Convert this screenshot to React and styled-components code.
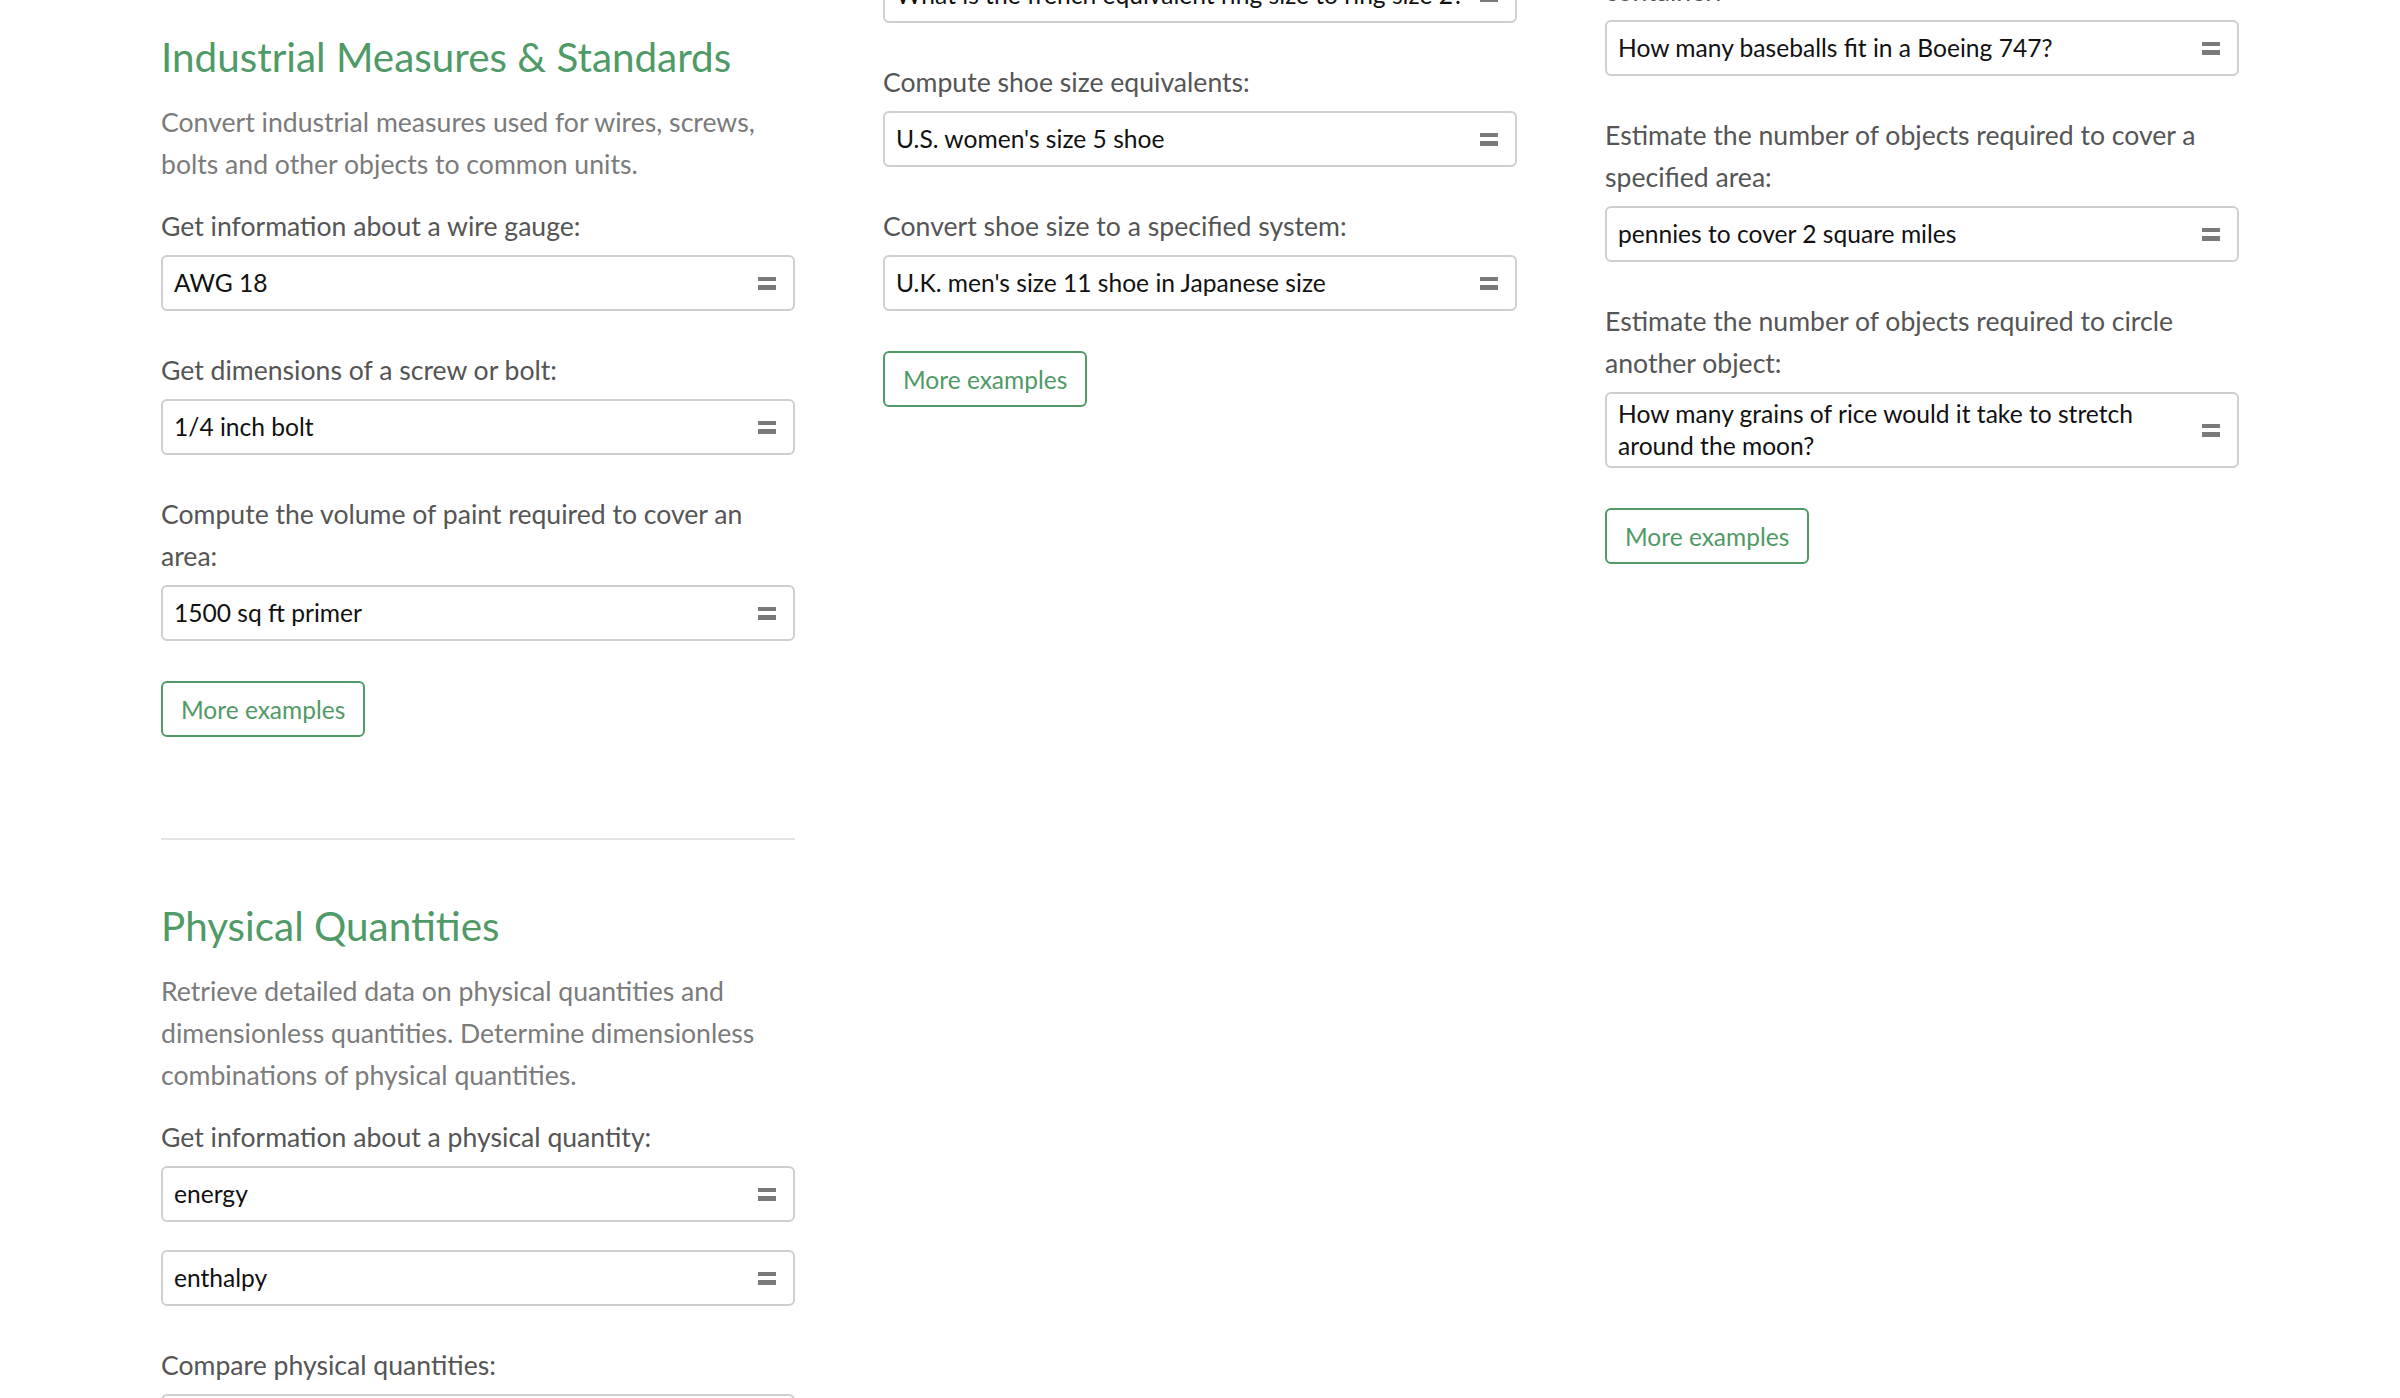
import React from "react";
import styled, { createGlobalStyle } from "styled-components";

const GREEN = "#4f9a66";

const GlobalStyle = createGlobalStyle`
  html, body {
    margin: 0;
    padding: 0;
    background: #fff;
    overflow: hidden;
  }

  body {
    font-family: Lato, "Open Sans", sans-serif;
    -webkit-font-smoothing: antialiased;
  }
`;

const columns = [
  {
    shift: 32,
    sections: [
      {
        title: "Industrial Measures & Standards",
        text: "Convert industrial measures used for wires, screws, bolts and other objects to common units.",
        examples: [
          { label: "Get information about a wire gauge:", inputs: ["AWG 18"] },
          { label: "Get dimensions of a screw or bolt:", inputs: ["1/4 inch bolt"] },
          {
            label: "Compute the volume of paint required to cover an area:",
            inputs: ["1500 sq ft primer"],
          },
        ],
      },
      {
        title: "Physical Quantities",
        text: "Retrieve detailed data on physical quantities and dimensionless quantities. Determine dimensionless combinations of physical quantities.",
        examples: [
          {
            label: "Get information about a physical quantity:",
            inputs: ["energy", "enthalpy"],
          },
          { label: "Compare physical quantities:", inputs: ["energy vs work"] },
        ],
      },
    ],
  },
  {
    shift: -83,
    sections: [
      {
        examples: [
          {
            label: "Convert ring size to a specified system:",
            inputs: ["What is the french equivalent ring size to ring size 2?"],
          },
          { label: "Compute shoe size equivalents:", inputs: ["U.S. women's size 5 shoe"] },
          {
            label: "Convert shoe size to a specified system:",
            inputs: ["U.K. men's size 11 shoe in Japanese size"],
          },
        ],
      },
    ],
  },
  {
    shift: -72,
    sections: [
      {
        examples: [
          {
            label: "Estimate the number of objects required to fill a container:",
            inputs: ["How many baseballs fit in a Boeing 747?"],
          },
          {
            label: "Estimate the number of objects required to cover a specified area:",
            inputs: ["pennies to cover 2 square miles"],
          },
          {
            label: "Estimate the number of objects required to circle another object:",
            inputs: ["How many grains of rice would it take to stretch around the moon?"],
          },
        ],
      },
    ],
  },
];

const EqualsIcon = () => (
  <svg width="18" height="13" viewBox="0 0 18 13" aria-hidden="true">
    <rect x="0" y="0" width="18" height="4" fill="#7a7a7a" />
    <rect x="0" y="8" width="18" height="5" fill="#7a7a7a" />
  </svg>
);

const App = () => {
  return (
    <Page>
      <GlobalStyle />
      <Grid>
        {columns.map((col, i) => (
          <Column key={i} $shift={col.shift}>
            {col.sections.map((s, j) => (
              <Section key={j}>
                {s.title && <Heading>{s.title}</Heading>}
                {s.text && <Description>{s.text}</Description>}
                <ExampleList>
                  {s.examples.map((ex) => (
                    <Example key={ex.label}>
                      <Label>{ex.label}</Label>
                      <Inputs>
                        {ex.inputs.map((q) => (
                          <QueryBox key={q}>
                            <QueryText>{q}</QueryText>
                            <EqualsIcon />
                          </QueryBox>
                        ))}
                      </Inputs>
                    </Example>
                  ))}
                </ExampleList>
                <MoreButton>More examples</MoreButton>
              </Section>
            ))}
          </Column>
        ))}
      </Grid>
    </Page>
  );
};

const Page = styled.div`
  height: 100vh;
  overflow: hidden;
  background: #fff;
`;

const Grid = styled.div`
  display: grid;
  grid-template-columns: repeat(3, 634px);
  column-gap: 88px;
  justify-content: center;
  align-items: start;
`;

const Column = styled.div`
  display: flex;
  flex-direction: column;
  margin-top: ${(p) => p.$shift}px;
`;

const Section = styled.section`
  display: flex;
  flex-direction: column;

  & + & {
    margin-top: 101px;
    padding-top: 61px;
    border-top: 2px solid #e3e3e3;
  }
`;

const Heading = styled.h2`
  margin: 0 0 19px;
  font-size: 40.4px;
  line-height: 50px;
  font-weight: 400;
  color: ${GREEN};
`;

const Description = styled.p`
  margin: 0 0 20px;
  font-size: 26.6px;
  line-height: 42px;
  color: #7b7b7b;
`;

const ExampleList = styled.div`
  display: flex;
  flex-direction: column;
  gap: 38px;
`;

const Example = styled.div`
  display: flex;
  flex-direction: column;
  gap: 8px;
`;

const Label = styled.div`
  font-size: 26.6px;
  line-height: 42px;
  color: #555;
`;

const Inputs = styled.div`
  display: flex;
  flex-direction: column;
  gap: 28px;
`;

const QueryBox = styled.div`
  display: flex;
  align-items: center;
  gap: 14px;
  box-sizing: border-box;
  min-height: 56px;
  padding: 4px 17px 4px 11px;
  border: 2px solid #cfcfcf;
  border-radius: 6px;
  background: #fff;

  svg {
    flex-shrink: 0;
  }
`;

const QueryText = styled.span`
  flex: 1;
  font-size: 24.6px;
  line-height: 32px;
  color: #111;
`;

const MoreButton = styled.button`
  align-self: flex-start;
  margin-top: 40px;
  height: 56px;
  padding: 0 18px;
  border: 2px solid ${GREEN};
  border-radius: 6px;
  background: #fff;
  color: ${GREEN};
  font-family: inherit;
  font-size: 24.5px;
  cursor: pointer;
`;

export default App;
